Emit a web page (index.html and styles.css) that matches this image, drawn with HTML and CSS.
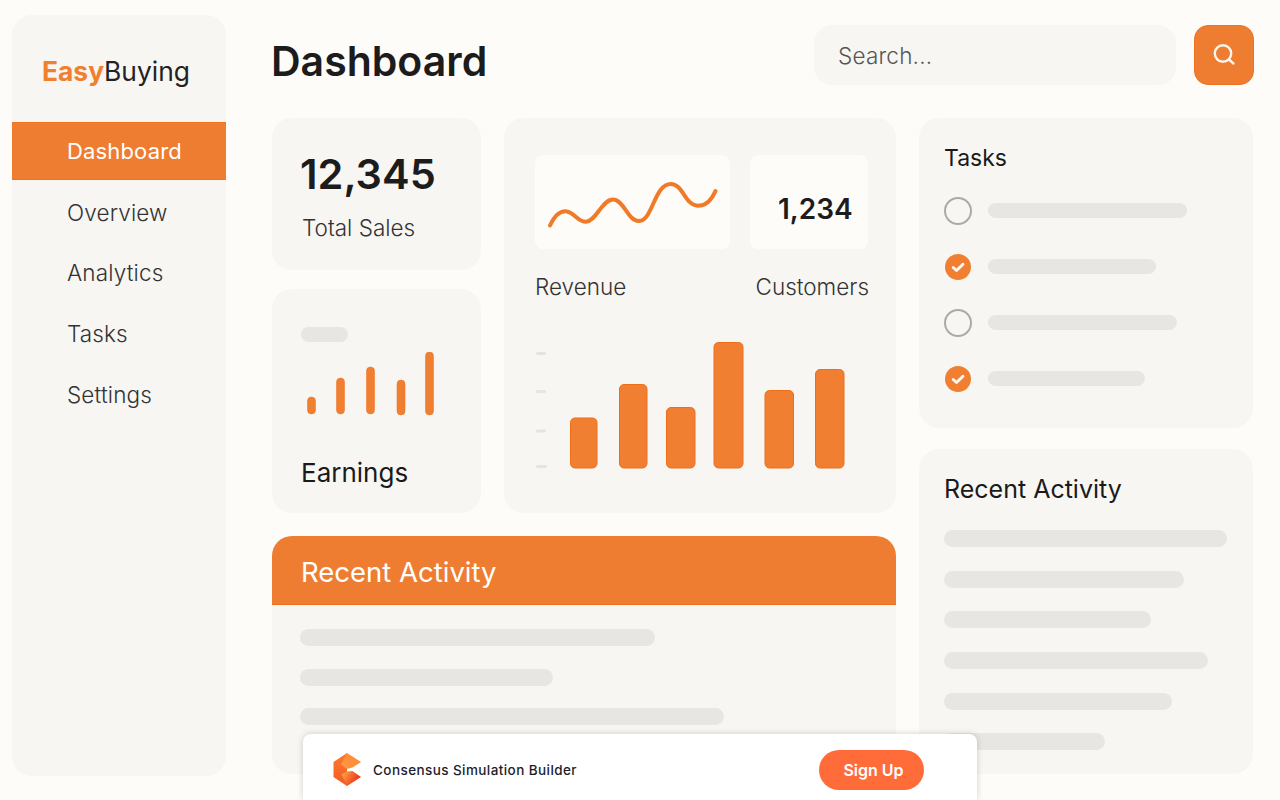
FILE: index.html
```html
<!DOCTYPE html>
<html lang="en">
<head>
  <meta charset="UTF-8" />
  <title>EasyBuying Dashboard</title>
  <link rel="stylesheet" href="styles.css">
</head>
<body>

<div class="page">
  <aside class="sidebar">
    <div class="logo"><b>Easy</b>Buying</div>
    <nav class="nav">
      <a class="nav-item active">Dashboard</a>
      <a class="nav-item">Overview</a>
      <a class="nav-item">Analytics</a>
      <a class="nav-item">Tasks</a>
      <a class="nav-item">Settings</a>
    </nav>
  </aside>

  <main class="main">
    <header class="topbar">
      <h1>Dashboard</h1>
      <div class="search"><span>Search...</span></div>
      <button class="search-btn" aria-label="Search">
        <svg width="26" height="26" viewBox="0 0 26 26" fill="none" stroke="#fdf6ee" stroke-width="2.4" stroke-linecap="round">
          <circle cx="12" cy="11.5" r="8.2"/>
          <path d="M18.2 17.7L22.4 21.5"/>
        </svg>
      </button>
    </header>

    <div class="columns">
      <div class="col-wide">
        <div class="top-row">
          <div class="stack">
            <section class="card sales">
              <div class="sales-num">12,345</div>
              <div class="sales-label">Total Sales</div>
            </section>
            <section class="card earnings">
              <div class="line earnings-line"></div>
              <svg class="earnings-bars" width="130" height="64" viewBox="0 0 130 64">
                <rect x="0.5" y="45" width="8" height="17" rx="4"/>
                <rect x="29.5" y="26" width="8" height="36" rx="4"/>
                <rect x="59.5" y="15" width="8" height="47" rx="4"/>
                <rect x="90" y="28" width="8" height="35" rx="4"/>
                <rect x="118.5" y="0" width="8" height="63" rx="4"/>
              </svg>
              <div class="earnings-label">Earnings</div>
            </section>
          </div>

          <section class="card revenue">
            <div class="rev-boxes">
              <div class="box box-spark">
                <svg width="195" height="94" viewBox="0 0 195 94" fill="none">
                  <path d="M15 70.5C20 60 26 55.5 32 56.5C39 57.5 43 67 51 66.8C61 66.5 67 44.5 78 44.5C89 44.5 93 66.5 104 66C118 65.5 119 29 136 29C148 29 150 50.5 163 50.8C172 51 177 44 180.5 36" stroke="#f07a28" stroke-width="4" stroke-linecap="round"/>
                </svg>
              </div>
              <div class="box box-num">1,234</div>
            </div>
            <div class="rev-labels">
              <span>Revenue</span>
              <span>Customers</span>
            </div>
            <svg class="rev-chart" width="310" height="130" viewBox="0 0 310 130">
              <g class="ticks">
                <rect x="1" y="11" width="10" height="3" rx="1.5"/>
                <rect x="1" y="49" width="10" height="3" rx="1.5"/>
                <rect x="1" y="88.5" width="10" height="3" rx="1.5"/>
                <rect x="1" y="124" width="11" height="3" rx="1.5"/>
              </g>
              <g class="bars">
                <rect x="35.5" y="77" width="26.5" height="50" rx="4.5"/>
                <rect x="84.5" y="43.5" width="27.5" height="83.5" rx="4.5"/>
                <rect x="131.5" y="66.5" width="28.5" height="60.5" rx="4.5"/>
                <rect x="179" y="1.5" width="29" height="125.5" rx="4.5"/>
                <rect x="230" y="49.5" width="28.5" height="77.5" rx="4.5"/>
                <rect x="280.5" y="28.5" width="28.5" height="98.5" rx="4.5"/>
              </g>
            </svg>
          </section>
        </div>

        <section class="card activity">
          <h2 class="activity-head">Recent Activity</h2>
          <div class="activity-lines">
            <div class="line" style="width:355px"></div>
            <div class="line" style="width:253px"></div>
            <div class="line" style="width:424px"></div>
          </div>
        </section>
      </div>

      <div class="col-side">
        <section class="card tasks">
          <h2>Tasks</h2>
          <ul class="task-list">
            <li><span class="radio"></span><div class="line" style="width:199px"></div></li>
            <li>
              <span class="radio done">
                <svg width="26" height="26" viewBox="0 0 26 26" fill="none" stroke="#fff" stroke-width="2.8" stroke-linecap="round" stroke-linejoin="round"><path d="M8.2 13.5L11.5 16.5L18 10.2"/></svg>
              </span>
              <div class="line" style="width:168px"></div>
            </li>
            <li><span class="radio"></span><div class="line" style="width:189px"></div></li>
            <li>
              <span class="radio done">
                <svg width="26" height="26" viewBox="0 0 26 26" fill="none" stroke="#fff" stroke-width="2.8" stroke-linecap="round" stroke-linejoin="round"><path d="M8.2 13.5L11.5 16.5L18 10.2"/></svg>
              </span>
              <div class="line" style="width:157px"></div>
            </li>
          </ul>
        </section>

        <section class="card side-activity">
          <h2>Recent Activity</h2>
          <div class="side-lines">
            <div class="line" style="width:283px"></div>
            <div class="line" style="width:240px"></div>
            <div class="line" style="width:207px"></div>
            <div class="line" style="width:264px"></div>
            <div class="line" style="width:228px"></div>
            <div class="line" style="width:161px"></div>
          </div>
        </section>
      </div>
    </div>
  </main>
</div>

<div class="banner">
  <svg class="banner-logo" width="30" height="34" viewBox="0 0 30 34">
    <defs>
      <linearGradient id="logoTop" x1="0" y1="1" x2="1" y2="0">
        <stop offset="0" stop-color="#ff9a42"/>
        <stop offset="1" stop-color="#ff8534"/>
      </linearGradient>
      <linearGradient id="logoLeft" x1="0" y1="0" x2="0" y2="1">
        <stop offset="0" stop-color="#fb7a30"/>
        <stop offset="1" stop-color="#f65a22"/>
      </linearGradient>
      <linearGradient id="logoBottom" x1="0" y1="0" x2="1" y2="0.5">
        <stop offset="0" stop-color="#ffb04e"/>
        <stop offset="1" stop-color="#ea2c12"/>
      </linearGradient>
    </defs>
    <path fill="url(#logoLeft)" d="M0.5 9L14 0V33L0.5 24Z"/>
    <path fill="url(#logoTop)" d="M14 0L28 9L19.5 14.5L14 16L8 11.5Z"/>
    <path fill="url(#logoBottom)" d="M8.5 21.5L14 18.5L19.5 18L28 24L14 33Z"/>
  </svg>
  <span class="banner-name">Consensus Simulation Builder</span>
  <button class="signup">Sign Up</button>
</div>

</body>
</html>
```

FILE: styles.css
```css
* {
  box-sizing: border-box;
}

html, body {
  height: 100%;
}

body {
  margin: 0;
  background-color: #fdfcf9;
  font-family: Inter, "Liberation Sans", sans-serif;
  color: #1a1a1a;
  overflow: hidden;
}

h1, h2, ul {
  margin: 0;
  padding: 0;
  font-weight: 400;
}

.page {
  display: flex;
  gap: 46px;
  padding: 15px 26px 0 12px;
}

/* sidebar */
.sidebar {
  width: 214px;
  height: 761px;
  flex: none;
  background-color: #f7f6f3;
  border-radius: 20px;
}

.logo {
  padding: 39px 0 0 30px;
  height: 107px;
  font-size: 26.4px;
  line-height: 34px;
  color: #222;
}

.logo b {
  color: #f07f2e;
  font-weight: 700;
}

.nav {
  display: flex;
  flex-direction: column;
  gap: 2.7px;
}

.nav-item {
  display: flex;
  align-items: center;
  height: 58px;
  padding: 1px 0 0 55px;
  font-size: 22.5px;
  font-weight: 300;
  letter-spacing: 0.15px;
  color: #333;
}

.nav-item.active {
  padding-top: 0;
  font-size: 22px;
  font-weight: 400;
  background-color: #ee7d31;
  border-top: 1px solid #f0741f;
  border-bottom: 1px solid #f0741f;
  color: #fff;
}

/* top bar */
.main {
  flex: 1;
  min-width: 0;
}

.topbar {
  display: flex;
  align-items: center;
  height: 60px;
  margin: 10px 0 33px;
}

.topbar h1 {
  flex: 1;
  margin: 12px 0 0 -1px;
  font-size: 41px;
  font-weight: 600;
  color: #1c1c1c;
}

.search {
  display: flex;
  align-items: center;
  width: 362px;
  height: 60px;
  padding-left: 24px;
  margin-right: 18px;
  background-color: #f7f6f3;
  border-radius: 18px;
  font-size: 22.5px;
  font-weight: 300;
  letter-spacing: 0.2px;
  color: #555;
}

.search-btn {
  display: flex;
  align-items: center;
  justify-content: center;
  width: 60px;
  height: 60px;
  padding: 0;
  background-color: #ee7d31;
  border: 1px solid #ee7420;
  border-radius: 14px;
}

/* grid */
.columns {
  display: flex;
  gap: 23px;
}

.col-wide {
  width: 624px;
  display: flex;
  flex-direction: column;
  gap: 23px;
}

.col-side {
  width: 334px;
  display: flex;
  flex-direction: column;
  gap: 21px;
}

.top-row {
  display: flex;
  gap: 23px;
}

.stack {
  width: 209px;
  display: flex;
  flex-direction: column;
  gap: 19px;
}

.card {
  background-color: #f7f6f3;
  border-radius: 20px;
}

.line {
  height: 17px;
  background-color: #e7e6e2;
  border-radius: 9px;
}

/* total sales */
.sales {
  height: 152px;
  padding: 29px 0 0 28px;
}

.sales-num {
  font-size: 41.5px;
  line-height: 54px;
  font-weight: 600;
  color: #1c1c1c;
}

.sales-label {
  margin: 13px 0 0 2px;
  font-size: 22.5px;
  font-weight: 300;
  color: #333;
}

/* earnings */
.earnings {
  height: 224px;
  padding: 38px 0 0 29px;
}

.earnings-line {
  width: 47px;
  height: 15px;
}

.earnings-bars {
  display: block;
  margin: 10px 0 0 6px;
}

.earnings-bars rect {
  fill: #f07f31;
  stroke: #ee6f18;
  stroke-width: 0.5;
}

.earnings-label {
  margin-top: 41px;
  font-size: 26px;
  color: #1a1a1a;
}

/* revenue */
.revenue {
  width: 392px;
  height: 395px;
  padding: 37px 0 0 31px;
}

.rev-boxes {
  display: flex;
  gap: 20px;
}

.box {
  height: 94px;
  background-color: #fdfcf9;
  border-radius: 8px;
}

.box-spark {
  width: 195px;
}

.box-spark svg {
  display: block;
}

.box-num {
  width: 118px;
  padding-left: 28px;
  font-size: 28px;
  line-height: 108px;
  font-weight: 600;
  color: #1c1c1c;
}

.rev-labels {
  display: flex;
  justify-content: space-between;
  width: 334px;
  margin-top: 24px;
  font-size: 22.5px;
  font-weight: 300;
  color: #333;
}

.rev-chart {
  display: block;
  margin-top: 40.5px;
}

.ticks rect {
  fill: #e5e4e0;
}

.bars rect {
  fill: #f07f31;
  stroke: #ee6f18;
  stroke-width: 1;
}

/* recent activity, wide card */
.activity {
  height: 238px;
}

.activity-head {
  height: 69px;
  padding: 19px 0 0 29px;
  background-color: #ee7d31;
  border-bottom: 1px solid #ee6f18;
  border-radius: 20px 20px 0 0;
  font-size: 27.5px;
  color: #fff;
}

.activity-lines {
  display: flex;
  flex-direction: column;
  gap: 22.5px;
  padding: 24px 0 0 28px;
}

/* tasks */
.tasks {
  height: 310px;
  padding: 26px 0 0 25px;
}

.tasks h2 {
  font-size: 23px;
  color: #1a1a1a;
}

.task-list {
  list-style: none;
  margin: 25px 0 0 1px;
}

.task-list li {
  display: flex;
  align-items: center;
  gap: 17px;
  height: 28px;
  margin-bottom: 28px;
}

.task-list .line {
  height: 15px;
  margin-top: -1px;
}

.radio {
  display: block;
  flex: none;
  width: 28px;
  height: 28px;
  margin-left: -1px;
  margin-right: -1px;
  border: 2.5px solid #aaa;
  border-radius: 50%;
}

.radio.done {
  width: 26px;
  height: 26px;
  margin-left: 0;
  margin-right: 0;
  background-color: #f07f31;
  border: none;
}

.radio svg {
  display: block;
}

/* recent activity, side card */
.side-activity {
  height: 325px;
  padding: 25px 0 0 25px;
}

.side-activity h2 {
  font-size: 25px;
  color: #1a1a1a;
}

.side-lines {
  display: flex;
  flex-direction: column;
  gap: 23.7px;
  margin-top: 26px;
}

/* bottom banner */
.banner {
  position: absolute;
  left: 303px;
  top: 734px;
  width: 674px;
  height: 66px;
  display: flex;
  align-items: center;
  padding: 0 53px 0 30px;
  background-color: #fff;
  border-radius: 8px 8px 0 0;
  box-shadow: 0 0 6px rgba(0,0,0,0.18);
}

.banner-logo {
  flex: none;
  margin-top: 6px;
}

.banner-name {
  flex: 1;
  margin: 6px 0 0 10px;
  font-size: 13.5px;
  font-weight: 500;
  letter-spacing: 0.42px;
  color: #1c1d2b;
}

.signup {
  width: 105px;
  height: 40px;
  margin-top: 6px;
  padding: 0 0 0 4px;
  background-color: #ff6b39;
  border: none;
  border-radius: 20px;
  font-family: inherit;
  font-size: 16px;
  font-weight: 600;
  color: #fff;
}
```
